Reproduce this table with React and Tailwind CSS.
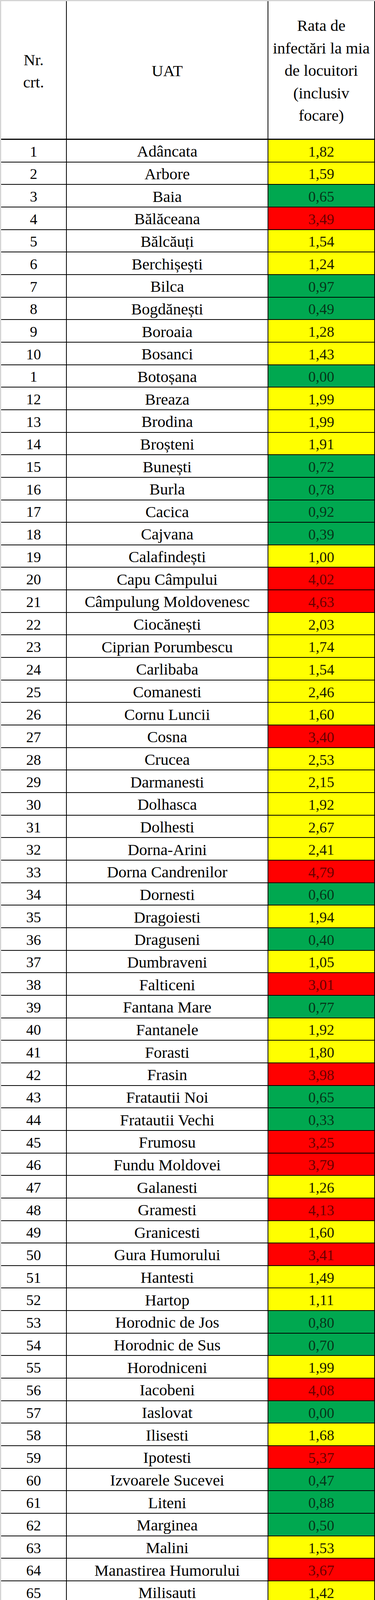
const ROWS = [
  ['1', 'Adâncata', '1,82', 'y'],
  ['2', 'Arbore', '1,59', 'y'],
  ['3', 'Baia', '0,65', 'g'],
  ['4', 'Bălăceana', '3,49', 'r'],
  ['5', 'Bălcăuți', '1,54', 'y'],
  ['6', 'Berchișești', '1,24', 'y'],
  ['7', 'Bilca', '0,97', 'g'],
  ['8', 'Bogdănești', '0,49', 'g'],
  ['9', 'Boroaia', '1,28', 'y'],
  ['10', 'Bosanci', '1,43', 'y'],
  ['1', 'Botoșana', '0,00', 'g'],
  ['12', 'Breaza', '1,99', 'y'],
  ['13', 'Brodina', '1,99', 'y'],
  ['14', 'Broșteni', '1,91', 'y'],
  ['15', 'Bunești', '0,72', 'g'],
  ['16', 'Burla', '0,78', 'g'],
  ['17', 'Cacica', '0,92', 'g'],
  ['18', 'Cajvana', '0,39', 'g'],
  ['19', 'Calafindești', '1,00', 'y'],
  ['20', 'Capu Câmpului', '4,02', 'r'],
  ['21', 'Câmpulung Moldovenesc', '4,63', 'r'],
  ['22', 'Ciocănești', '2,03', 'y'],
  ['23', 'Ciprian Porumbescu', '1,74', 'y'],
  ['24', 'Carlibaba', '1,54', 'y'],
  ['25', 'Comanesti', '2,46', 'y'],
  ['26', 'Cornu Luncii', '1,60', 'y'],
  ['27', 'Cosna', '3,40', 'r'],
  ['28', 'Crucea', '2,53', 'y'],
  ['29', 'Darmanesti', '2,15', 'y'],
  ['30', 'Dolhasca', '1,92', 'y'],
  ['31', 'Dolhesti', '2,67', 'y'],
  ['32', 'Dorna-Arini', '2,41', 'y'],
  ['33', 'Dorna Candrenilor', '4,79', 'r'],
  ['34', 'Dornesti', '0,60', 'g'],
  ['35', 'Dragoiesti', '1,94', 'y'],
  ['36', 'Draguseni', '0,40', 'g'],
  ['37', 'Dumbraveni', '1,05', 'y'],
  ['38', 'Falticeni', '3,01', 'r'],
  ['39', 'Fantana Mare', '0,77', 'g'],
  ['40', 'Fantanele', '1,92', 'y'],
  ['41', 'Forasti', '1,80', 'y'],
  ['42', 'Frasin', '3,98', 'r'],
  ['43', 'Fratautii Noi', '0,65', 'g'],
  ['44', 'Fratautii Vechi', '0,33', 'g'],
  ['45', 'Frumosu', '3,25', 'r'],
  ['46', 'Fundu Moldovei', '3,79', 'r'],
  ['47', 'Galanesti', '1,26', 'y'],
  ['48', 'Gramesti', '4,13', 'r'],
  ['49', 'Granicesti', '1,60', 'y'],
  ['50', 'Gura Humorului', '3,41', 'r'],
  ['51', 'Hantesti', '1,49', 'y'],
  ['52', 'Hartop', '1,11', 'y'],
  ['53', 'Horodnic de Jos', '0,80', 'g'],
  ['54', 'Horodnic de Sus', '0,70', 'g'],
  ['55', 'Horodniceni', '1,99', 'y'],
  ['56', 'Iacobeni', '4,08', 'r'],
  ['57', 'Iaslovat', '0,00', 'g'],
  ['58', 'Ilisesti', '1,68', 'y'],
  ['59', 'Ipotesti', '5,37', 'r'],
  ['60', 'Izvoarele Sucevei', '0,47', 'g'],
  ['61', 'Liteni', '0,88', 'g'],
  ['62', 'Marginea', '0,50', 'g'],
  ['63', 'Malini', '1,53', 'y'],
  ['64', 'Manastirea Humorului', '3,67', 'r'],
  ['65', 'Milisauti', '1,42', 'y'],
  ['66', 'Mitocu Dragomirnei', '1,72', 'y'],
  ['67', 'Moara', '3,97', 'r'],
  ['68', 'Moldova-Sulita', '1,54', 'y'],
  ['69', 'Moldovita', '2,91', 'y'],
  ['70', 'Musenita', '6,58', 'r'],
  ['71', 'Ostra', '0,29', 'g'],
  ['72', 'Panaci', '1,35', 'y'],
  ['73', 'Paltinoasa', '2,77', 'y'],
  ['74', 'Patrauti', '2,07', 'y'],
  ['75', 'Partestii de Jos', '0,35', 'g'],
  ['76', 'Poiana Stampei', '1,32', 'y'],
  ['77', 'Poieni-Solca', '2,20', 'y'],
  ['78', 'Pojorata', '2,71', 'y'],
  ['79', 'Preutesti', '1,27', 'y'],
  ['80', 'Putna', '0,50', 'g'],
  ['81', 'Radaseni', '1,73', 'y'],
  ['82', 'Radauti', '1,85', 'y'],
  ['83', 'Rasca', '1,34', 'y'],
  ['84', 'Sadova', '4,24', 'r'],
  ['85', 'Salcea', '1,75', 'y'],
  ['86', 'Satu Mare', '2,49', 'y'],
  ['87', 'Siminicea', '1,37', 'y'],
  ['88', 'Siret', '3,34', 'r'],
  ['89', 'Slatina', '1,40', 'y'],
  ['90', 'Solca', '1,90', 'y'],
  ['91', 'Straja', '1,83', 'y'],
  ['92', 'Stroiesti', '3,53', 'r'],
  ['93', 'Stulpicani', '2,33', 'y'],
  ['94', 'Suceava', '5,09', 'r'],
  ['95', 'Sucevita', '1,74', 'y'],
  ['96', 'Șaru Dornei', '3,82', 'r'],
  ['97', 'Șcheia', '5,11', 'r'],
  ['98', 'Șerbauti', '1,20', 'y'],
  ['99', 'Todiresti', '2,71', 'y'],
  ['100', 'Udesti', '1,80', 'y'],
  ['101', 'Ulma', '0,45', 'g'],
  ['102', 'Vadu Moldovei', '1,99', 'y'],
  ['103', 'Valea Moldovei', '0,21', 'g'],
  ['104', 'Vama', '3,37', 'r'],
  ['105', 'Vatra Dornei', '5,35', 'r'],
  ['106', 'Vatra Moldovitei', '1,36', 'y'],
  ['107', 'Veresti', '2,26', 'y'],
  ['108', 'Vicovu de Jos', '1,29', 'y'],
  ['109', 'Vicovu de Sus', '0,85', 'g'],
  ['110', 'Voitinel', '0,18', 'g'],
  ['111', 'Volovat', '0,47', 'g'],
  ['112', 'Vulturesti', '1,99', 'y'],
  ['113', 'Zamostea', '1,34', 'y'],
  ['114', 'Zvoristea', '2,27', 'y']
];

const FILL = {
  y: 'bg-[#ffff00] text-[#1a1a00]',
  g: 'bg-[#00a850] text-[#06361a]',
  r: 'bg-[#ff0000] text-[#6a0000]'
};

function Row({ nr, name, value, level }) {
  return (
    <div className="flex h-[57.66px]">
      <div className="w-[168px] shrink-0 flex items-center justify-center pt-[4px] border-r-2 border-b-2 border-black text-[38px]">
        {nr}
      </div>
      <div className="w-[516px] shrink-0 flex items-center justify-center pt-[4px] border-r-2 border-b-2 border-black text-[41px] whitespace-nowrap">
        {name}
      </div>
      <div className={`w-[273px] shrink-0 flex items-center justify-center pt-[4px] border-r-2 border-b-2 border-black text-[38px] ${FILL[level]}`}>
        {value}
      </div>
    </div>
  );
}

export default function App() {
  return (
    <div className="bg-[#d4d4d4] pl-[3px] pt-[3px] font-['Liberation_Serif',serif] text-black leading-none">
      <div className="bg-white">
        <header className="flex h-[355px] leading-[57.5px]">
          <div className="w-[168px] shrink-0 flex flex-col items-center justify-center pt-[6px] border-r-2 border-b-[3px] border-black text-[41px]">
            <span>Nr.</span>
            <span>crt.</span>
          </div>
          <div className="w-[516px] shrink-0 flex items-center justify-center pt-[6px] border-r-2 border-b-[3px] border-black text-[41px]">
            UAT
          </div>
          <div className="w-[273px] shrink-0 flex flex-col items-center justify-center pt-[4px] border-r-2 border-b-[3px] border-black text-[41px] whitespace-nowrap">
            <span>Rata de</span>
            <span>infectări la mia</span>
            <span>de locuitori</span>
            <span>(inclusiv</span>
            <span>focare)</span>
          </div>
        </header>

        {ROWS.map(([nr, name, value, level], i) => (
          <Row key={i} nr={nr} name={name} value={value} level={level} />
        ))}

        <div className="flex h-[59px]">
          <div className="w-[168px] shrink-0 border-r border-b border-[#cfcfcf]" />
          <div className="w-[516px] shrink-0 border-r-2 border-b border-r-black border-b-[#cfcfcf]" />
          <div className="relative w-[273px] shrink-0 bg-[#00a850]">
            <svg className="absolute inset-0 w-full h-full" viewBox="0 0 273 59" preserveAspectRatio="none">
              <line x1="2" y1="57" x2="272" y2="3" stroke="#000" strokeWidth="2" strokeDasharray="7 4" />
            </svg>
          </div>
        </div>

        <div className="flex h-[63px]">
          <div className="w-[168px] shrink-0 border-r border-[#cfcfcf]" />
          <div className="w-[514px] shrink-0 border-r border-[#cfcfcf]" />
          <div className="w-[275px] shrink-0 flex items-center justify-center pt-[6px] bg-[#ffff00] border-4 border-black text-[38px] text-[#1a1a00]">
            2,62
          </div>
        </div>
      </div>
    </div>
  );
}
